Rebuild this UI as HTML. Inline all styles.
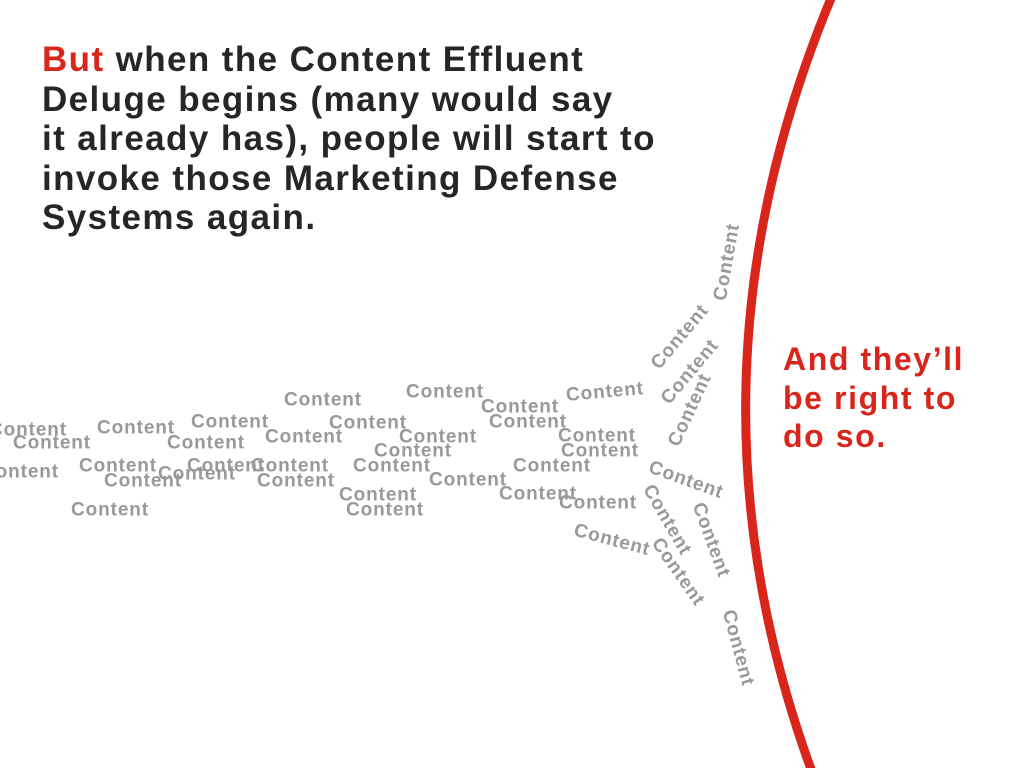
<!DOCTYPE html>
<html><head><meta charset="utf-8"><style>
body{margin:0;width:1024px;height:768px;background:#fff;overflow:hidden;position:relative;font-family:"Liberation Sans",sans-serif}
.h{position:absolute;left:42px;top:40px;font-size:35px;line-height:39.5px;font-weight:bold;color:#262626;letter-spacing:1.4px;margin:0}
.r{color:#d9261c}
.s{position:absolute;left:783px;top:340px;font-size:32px;line-height:38.5px;font-weight:bold;color:#d9261c;letter-spacing:1.6px}
.c{position:absolute;font-size:19px;font-weight:bold;color:#999;letter-spacing:0.9px;transform:translate(-50%,-50%);white-space:nowrap;line-height:1}
</style></head><body>
<svg width="1024" height="768" style="position:absolute;left:0;top:0"><path d="M832,-4 Q670,384 812,772" fill="none" stroke="#d9261c" stroke-width="9"/></svg>
<div class="h"><span class="r">But</span> when the Content Effluent<br>Deluge begins (many would say<br>it already has), people will start to<br>invoke those Marketing Defense<br>Systems again.</div>
<div class="s">And they’ll<br>be right to<br>do so.</div>
<div class="c" style="left:28px;top:430px">Content</div>
<div class="c" style="left:52px;top:443px">Content</div>
<div class="c" style="left:20px;top:472px">Content</div>
<div class="c" style="left:110px;top:510px">Content</div>
<div class="c" style="left:136px;top:428px">Content</div>
<div class="c" style="left:118px;top:466px">Content</div>
<div class="c" style="left:143px;top:481px">Content</div>
<div class="c" style="left:206px;top:443px">Content</div>
<div class="c" style="left:230px;top:422px">Content</div>
<div class="c" style="left:197px;top:474px">Content</div>
<div class="c" style="left:226px;top:466px">Content</div>
<div class="c" style="left:290px;top:466px">Content</div>
<div class="c" style="left:296px;top:481px">Content</div>
<div class="c" style="left:304px;top:437px">Content</div>
<div class="c" style="left:323px;top:400px">Content</div>
<div class="c" style="left:368px;top:423px">Content</div>
<div class="c" style="left:378px;top:495px">Content</div>
<div class="c" style="left:385px;top:510px">Content</div>
<div class="c" style="left:392px;top:466px">Content</div>
<div class="c" style="left:413px;top:451px">Content</div>
<div class="c" style="left:438px;top:437px">Content</div>
<div class="c" style="left:445px;top:392px">Content</div>
<div class="c" style="left:468px;top:480px">Content</div>
<div class="c" style="left:520px;top:407px">Content</div>
<div class="c" style="left:528px;top:422px">Content</div>
<div class="c" style="left:538px;top:494px">Content</div>
<div class="c" style="left:552px;top:466px">Content</div>
<div class="c" style="left:597px;top:436px">Content</div>
<div class="c" style="left:600px;top:451px">Content</div>
<div class="c" style="left:598px;top:503px">Content</div>
<div class="c" style="left:605px;top:392px;transform:translate(-50%,-50%) rotate(-5deg)">Content</div>
<div class="c" style="left:612px;top:540px;transform:translate(-50%,-50%) rotate(15deg)">Content</div>
<div class="c" style="left:686px;top:480px;transform:translate(-50%,-50%) rotate(20deg)">Content</div>
<div class="c" style="left:667px;top:520px;transform:translate(-50%,-50%) rotate(60deg)">Content</div>
<div class="c" style="left:678px;top:572px;transform:translate(-50%,-50%) rotate(55deg)">Content</div>
<div class="c" style="left:711px;top:540px;transform:translate(-50%,-50%) rotate(70deg)">Content</div>
<div class="c" style="left:738px;top:648px;transform:translate(-50%,-50%) rotate(75deg)">Content</div>
<div class="c" style="left:680px;top:337px;transform:translate(-50%,-50%) rotate(-50deg)">Content</div>
<div class="c" style="left:690px;top:372px;transform:translate(-50%,-50%) rotate(-50deg)">Content</div>
<div class="c" style="left:690px;top:410px;transform:translate(-50%,-50%) rotate(-65deg)">Content</div>
<div class="c" style="left:727px;top:262px;transform:translate(-50%,-50%) rotate(-80deg)">Content</div>
</body></html>
